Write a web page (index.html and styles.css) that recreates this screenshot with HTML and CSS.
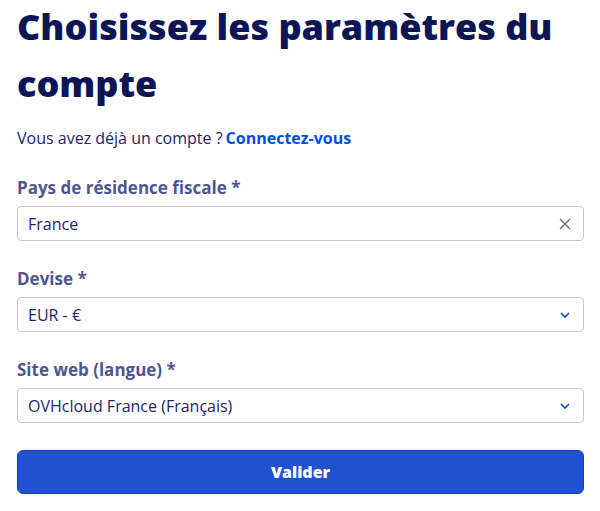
FILE: index.html
```html
<!DOCTYPE html>
<html lang="fr">
<head>
<meta charset="utf-8">
<link rel="stylesheet" href="styles.css">
</head>
<body>
<main class="page">
  <h1 class="title">Choisissez les paramètres du compte</h1>
  <p class="login">Vous avez déjà un compte ?<a class="login-link" href="#">Connectez-vous</a></p>
  <div class="field">
    <label class="label">Pays de résidence fiscale *</label>
    <div class="control">
      <span class="value">France</span>
      <svg class="icon-clear" width="12" height="12" viewBox="0 0 12 12"><path d="M1 1 L11 11 M11 1 L1 11" stroke="#666" stroke-width="1.2" fill="none"/></svg>
    </div>
  </div>
  <div class="field">
    <label class="label">Devise *</label>
    <div class="control">
      <span class="value">EUR - €</span>
      <svg class="icon-chevron" width="12" height="8" viewBox="0 0 12 8"><path d="M2 2 L6 6 L10 2" stroke="#0050d7" stroke-width="1.6" fill="none"/></svg>
    </div>
  </div>
  <div class="field">
    <label class="label">Site web (langue) *</label>
    <div class="control">
      <span class="value">OVHcloud France (Français)</span>
      <svg class="icon-chevron" width="12" height="8" viewBox="0 0 12 8"><path d="M2 2 L6 6 L10 2" stroke="#0050d7" stroke-width="1.6" fill="none"/></svg>
    </div>
  </div>
  <button class="submit" type="button">Valider</button>
</main>
</body>
</html>
```
FILE: styles.css
```css
* { box-sizing: border-box; }
html, body { margin: 0; padding: 0; background: #fff; }
body { font-family: "Open Sans", "Lato", sans-serif; }
.page { padding: 0 16px 0 17px; width: 600px; }
.title {
  margin: 0;
  margin-top: -2px;
  font-size: 36px;
  line-height: 57px;
  font-weight: 800;
  color: #0c1657;
}
.login {
  margin: 16px 0 0;
  font-size: 16px;
  line-height: 20px;
  color: #1c2566;
}
.login-link {
  color: #0050d7;
  font-weight: 700;
  text-decoration: none;
  margin-left: 3px;
}
.field { margin-top: 30px; }
.field + .field { margin-top: 28px; }
.label {
  display: block;
  font-size: 17px;
  line-height: 20px;
  font-weight: 700;
  color: #4d5693;
  margin-bottom: 8px;
}
.control {
  height: 35px;
  border: 1px solid #c8c8c8;
  border-radius: 4px;
  display: flex;
  align-items: center;
  justify-content: space-between;
  padding: 0 12px 0 10px;
}
.value { font-size: 16px; color: #1c2566; }
.submit {
  display: block;
  width: 100%;
  margin-top: 27px;
  height: 44px;
  background: #2150d0;
  border: 1px solid #1a3fc4;
  border-radius: 6px;
  color: #fff;
  font-family: inherit;
  font-size: 16px;
  font-weight: 800;
}
```
